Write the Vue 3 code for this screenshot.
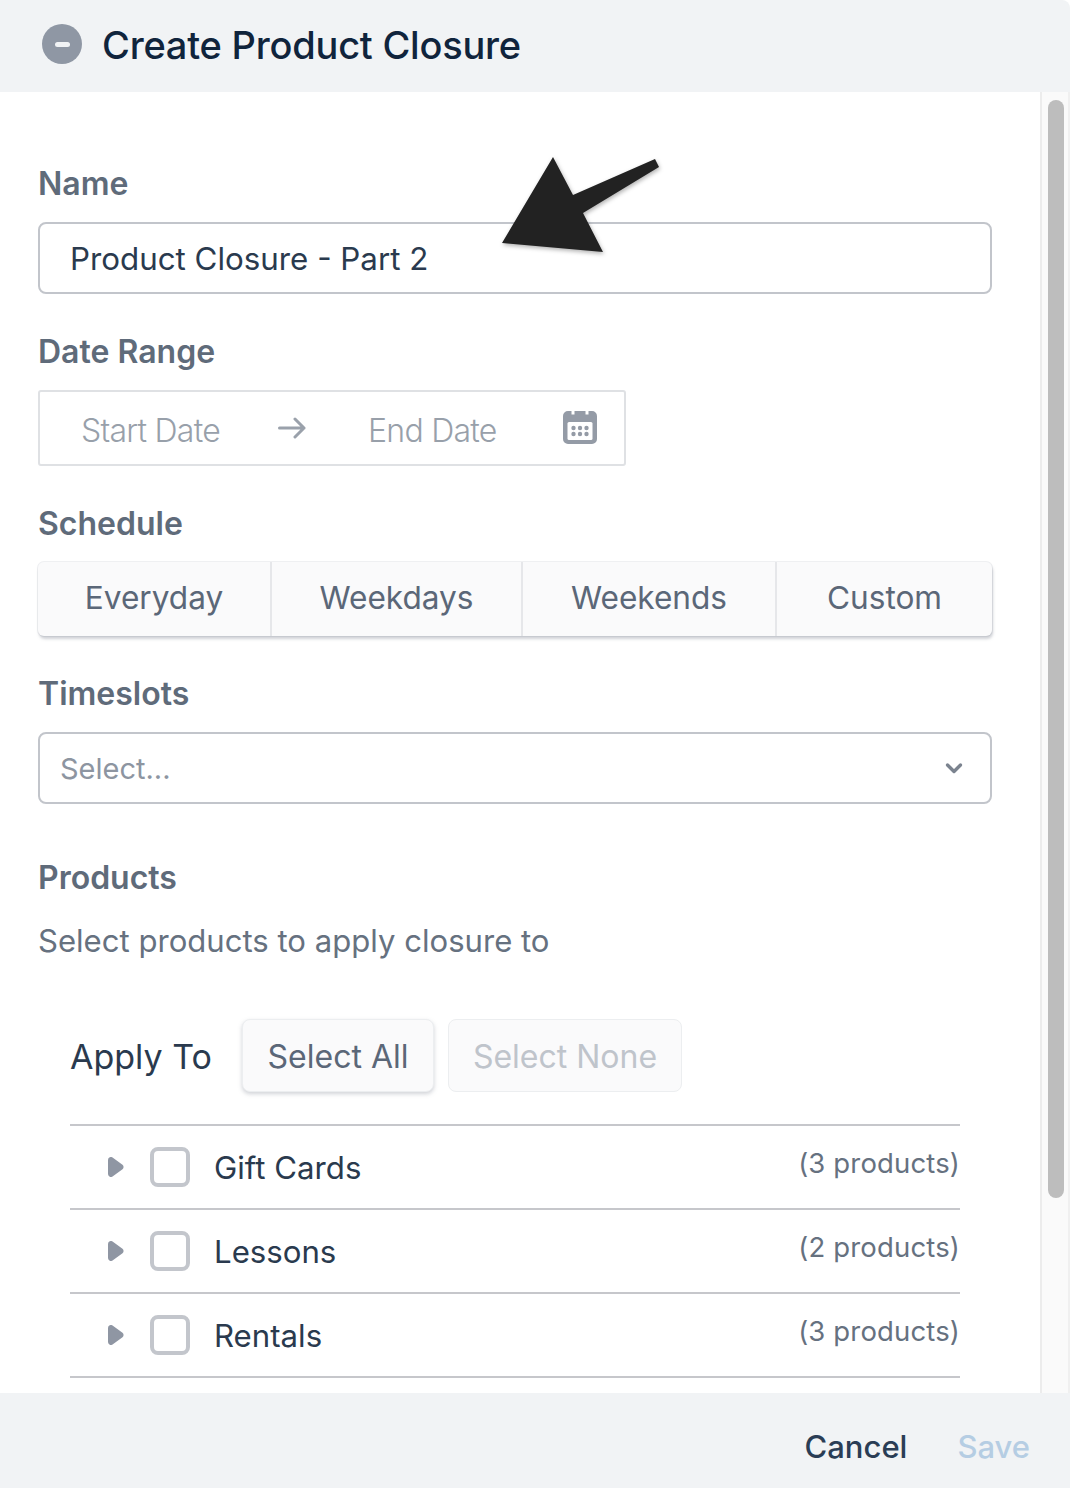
<script setup>
const scheduleOptions = ['Everyday', 'Weekdays', 'Weekends', 'Custom']

const categories = [
  { name: 'Gift Cards', count: 3 },
  { name: 'Lessons', count: 2 },
  { name: 'Rentals', count: 3 },
]
</script>

<template>
  <div class="modal">
    <header class="modal-header">
      <span class="minus-badge"><span class="minus-bar"></span></span>
      <h1 class="modal-title">Create Product Closure</h1>
    </header>

    <div class="modal-body">
      <div class="form">
        <label class="field-label name-label">Name</label>
        <div class="text-input name-input">Product Closure - Part 2</div>

        <label class="field-label">Date Range</label>
        <div class="date-range">
          <span class="date-text start-date">Start Date</span>
          <svg class="date-arrow" viewBox="0 0 28 22" fill="none" stroke="#9aa1ab" stroke-width="3" stroke-linecap="round" stroke-linejoin="round">
            <path d="M1.5 11H26M17 2l9 9-9 9" />
          </svg>
          <span class="date-text end-date">End Date</span>
          <svg class="date-icon" viewBox="0 0 34 34">
            <path fill="#949ba6" d="M5 1h3.5v3.5h3V1h11v3.5h3V1H29a5 5 0 0 1 5 5v23a5 5 0 0 1-5 5H5a5 5 0 0 1-5-5V6a5 5 0 0 1 5-5z" />
            <rect x="4.5" y="12" width="25" height="18" rx="1.5" fill="#fff" />
            <g fill="#949ba6">
              <circle cx="10.5" cy="18" r="2.2" />
              <circle cx="17" cy="18" r="2.2" />
              <circle cx="23.5" cy="18" r="2.2" />
              <circle cx="10.5" cy="24" r="2.2" />
              <circle cx="17" cy="24" r="2.2" />
              <circle cx="23.5" cy="24" r="2.2" />
            </g>
          </svg>
        </div>

        <label class="field-label schedule-label">Schedule</label>
        <div class="segmented">
          <button v-for="option in scheduleOptions" :key="option" class="segment">{{ option }}</button>
        </div>

        <label class="field-label">Timeslots</label>
        <div class="text-input select-input">
          <span>Select...</span>
          <svg class="chevron" viewBox="0 0 18 12" fill="none" stroke="#7b838f" stroke-width="3.4" stroke-linecap="round" stroke-linejoin="round">
            <path d="M2.5 3l6.5 6.5L15.5 3" />
          </svg>
        </div>

        <label class="field-label products-label">Products</label>
        <p class="products-help">Select products to apply closure to</p>

        <div class="apply-section">
          <div class="apply-row">
            <span class="apply-title">Apply To</span>
            <button class="small-btn">Select All</button>
            <button class="small-btn disabled">Select None</button>
          </div>
          <div v-for="cat in categories" :key="cat.name" class="cat-row">
            <svg class="caret" viewBox="0 0 16 20">
              <path fill="#8f96a3" d="M0 3a3 3 0 0 1 4.9-2.3l9.6 7a3 3 0 0 1 0 4.6l-9.6 7A3 3 0 0 1 0 17z" />
            </svg>
            <span class="checkbox"></span>
            <span class="cat-name">{{ cat.name }}</span>
            <span class="cat-count">({{ cat.count }} products)</span>
          </div>
        </div>
      </div>

      <div class="scroll-track"><div class="scroll-thumb"></div></div>

      <svg class="callout-arrow" viewBox="0 0 170 110">
        <polygon fill="#222222" points="61,7 10,93 111,102 91,63 167,17 163,9 81,45" />
      </svg>
    </div>

    <footer class="modal-footer">
      <button class="footer-btn cancel">Cancel</button>
      <button class="footer-btn save">Save</button>
    </footer>
  </div>
</template>

<style scoped>
.modal {
  width: 1070px;
  height: 1488px;
  display: flex;
  flex-direction: column;
  background: #ffffff;
  font-family: Inter, "Liberation Sans", sans-serif;
  overflow: hidden;
}

.modal-header {
  height: 92px;
  flex: none;
  box-sizing: border-box;
  display: flex;
  align-items: center;
  padding: 0 0 4px 42px;
  background: #f1f3f5;
  border-top-right-radius: 8px;
}

.minus-badge {
  width: 40px;
  height: 40px;
  border-radius: 50%;
  background: #8f97a4;
  display: flex;
  align-items: center;
  justify-content: center;
}

.minus-bar {
  width: 15px;
  height: 5px;
  border-radius: 3px;
  background: #f1f3f5;
}

.modal-title {
  margin: 2px 0 0 20px;
  font-size: 38px;
  font-weight: 500;
  letter-spacing: -0.22px;
  color: #10243c;
}

.modal-body {
  position: relative;
  flex: 1;
  min-height: 0;
  display: flex;
  overflow: hidden;
}

.form {
  width: 1040px;
  flex: none;
  padding: 70px 48px 0 38px;
  box-sizing: border-box;
}

.field-label {
  display: block;
  height: 42px;
  line-height: 44px;
  font-size: 32px;
  font-weight: 600;
  color: #5f6b7a;
}

.text-input {
  height: 72px;
  box-sizing: border-box;
  border: 2px solid #c2c5cb;
  border-radius: 8px;
  display: flex;
  align-items: center;
  font-size: 31.3px;
  color: #2a3a4e;
  margin: 18px 0 36px;
}

.name-input {
  padding: 2px 0 0 30px;
}

.date-range {
  width: 588px;
  height: 76px;
  box-sizing: border-box;
  border: 2px solid #dfe1e4;
  border-radius: 3px;
  display: flex;
  align-items: center;
  margin: 18px 0 36px;
  padding-left: 41px;
}

.date-text {
  font-size: 32px;
  font-weight: 300;
  letter-spacing: -0.75px;
  color: #98a0aa;
  white-space: nowrap;
  margin-top: 4px;
}

.start-date {
  width: 197px;
}

.end-date {
  width: 195px;
}

.date-arrow {
  width: 28px;
  height: 22px;
  flex: none;
  margin-right: 62px;
}

.date-icon {
  width: 34px;
  height: 34px;
  flex: none;
  margin-top: -2px;
}

.segmented {
  display: grid;
  grid-template-columns: 234fr 251fr 254fr 215fr;
  height: 74px;
  margin: 18px 0 36px;
  border-radius: 6px;
  background: #fafafb;
  box-shadow: 1px 3px 3px rgba(120, 126, 140, 0.35), 0 0 0 1px #eff0f2;
}

.segment {
  border: 0;
  border-right: 2px solid #e6e7ea;
  background: transparent;
  padding: 0 0 3px;
  font-family: inherit;
  font-size: 31.6px;
  color: #5b6778;
}

.segment:last-child {
  border-right: 0;
}

.select-input {
  justify-content: space-between;
  padding: 0 27px 0 20px;
  font-size: 29px;
  color: #8d95a1;
  margin-bottom: 52px;
}

.chevron {
  width: 18px;
  height: 12px;
}

.products-help {
  margin: 21px 0 0;
  height: 44px;
  line-height: 44px;
  font-size: 31.1px;
  color: #66717f;
}

.apply-section {
  width: 890px;
  margin: 55px 0 0 32px;
}

.apply-row {
  display: flex;
  align-items: center;
  height: 74px;
  padding-bottom: 32px;
  border-bottom: 2px solid #c6c7cb;
}

.apply-title {
  width: 172px;
  flex: none;
  font-size: 34px;
  color: #2a3a4e;
  margin-top: 2px;
}

.small-btn {
  height: 73px;
  box-sizing: border-box;
  padding: 2px 0 0;
  margin-right: 14px;
  border: 1px solid #eceef0;
  border-radius: 8px;
  background: #fafafb;
  box-shadow: 0 2px 4px rgba(120, 126, 140, 0.35);
  font-family: inherit;
  font-size: 32px;
  color: #5b6778;
  width: 192px;
}

.small-btn.disabled {
  width: 234px;
  box-shadow: none;
  color: #bfc4cb;
}

.cat-row {
  display: flex;
  align-items: center;
  height: 82px;
  border-bottom: 2px solid #c6c7cb;
  padding-left: 38px;
}

.caret {
  width: 16px;
  height: 20px;
  flex: none;
}

.checkbox {
  width: 40px;
  height: 40px;
  box-sizing: border-box;
  flex: none;
  margin-left: 26px;
  border: 4px solid #c3c6cc;
  border-radius: 8px;
}

.cat-name {
  margin-left: 24px;
  margin-top: 2px;
  font-size: 31.2px;
  color: #2a3a4e;
}

.cat-count {
  margin-left: auto;
  margin-top: -8px;
  font-size: 27.5px;
  letter-spacing: 0.15px;
  color: #66717f;
}

.scroll-track {
  width: 30px;
  flex: none;
  box-sizing: border-box;
  background: #fafafa;
  border-left: 2px solid #ececec;
  border-right: 2px solid #f0f0f0;
  padding: 8px 0 0 6px;
}

.scroll-thumb {
  width: 16px;
  height: 1098px;
  border-radius: 8px;
  background: #bdbdbd;
}

.callout-arrow {
  position: absolute;
  left: 492px;
  top: 58px;
  width: 170px;
  height: 110px;
  filter: drop-shadow(1px 2px 2px rgba(0, 0, 0, 0.3));
}

.modal-footer {
  height: 95px;
  flex: none;
  box-sizing: border-box;
  display: flex;
  align-items: center;
  justify-content: flex-end;
  gap: 50px;
  padding: 12px 40px 0 0;
  background: #f1f3f5;
}

.footer-btn {
  border: 0;
  background: transparent;
  padding: 0;
  font-family: inherit;
  font-size: 31px;
  font-weight: 500;
}

.cancel {
  color: #2a3d55;
}

.save {
  color: #b5cde3;
}
</style>

<style>
body {
  background: #5c6470;
}
</style>
